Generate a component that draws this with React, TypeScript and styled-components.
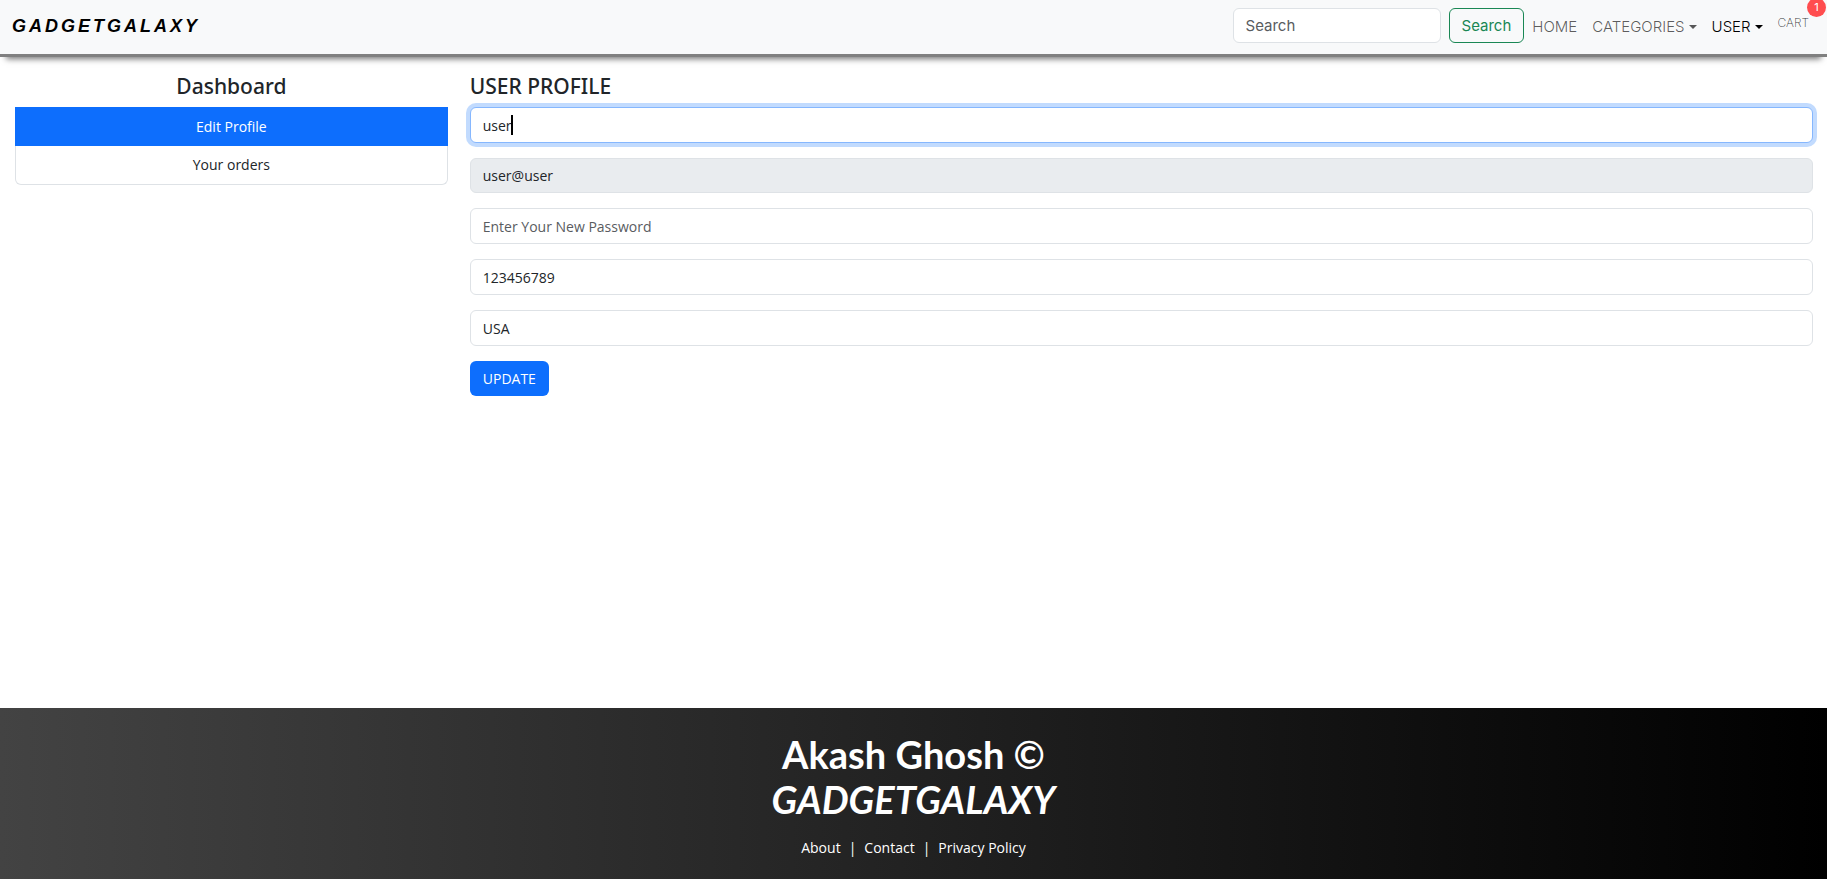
import React from "react";
import styled, { createGlobalStyle, css } from "styled-components";

const bodyFont = `"Open Sans", "Noto Sans", sans-serif`;
const navFont = `Inter, Roboto, sans-serif`;

const GlobalStyle = createGlobalStyle`
  *, *::before, *::after { box-sizing: border-box; }
  body {
    margin: 0;
    background: #fff;
    color: #212529;
    font-family: ${bodyFont};
    font-size: 14px;
    line-height: 22px;
  }
  a { color: inherit; text-decoration: none; }
`;

const Page = styled.div`
  display: flex;
  flex-direction: column;
  min-height: 100vh;
`;

const Navbar = styled.header`
  display: flex;
  align-items: center;
  justify-content: space-between;
  padding: 8px 18px 11px 12px;
  background: #f8f9fa;
  border-bottom: 3px solid #808080;
  box-shadow: 0 8px 6px -6px #777;
  font-family: ${navFont};
  font-size: 15px;
`;

const Brand = styled.a`
  color: #000;
  font-family: "Liberation Sans", Arial, sans-serif;
  font-size: 18px;
  font-style: italic;
  font-weight: 700;
  letter-spacing: 3px;
`;

const NavRight = styled.nav`
  display: flex;
  align-items: center;
`;

const SearchForm = styled.form`
  display: flex;
  gap: 8px;
`;

const control = css`
  border: 1px solid #dee2e6;
  border-radius: 6px;
  background: #fff;
  color: #212529;
  font: inherit;
  &::placeholder { color: #595c5f; opacity: 1; }
`;

const SearchInput = styled.input`
  ${control}
  width: 208px;
  height: 35px;
  padding: 0 12px;
`;

const SearchButton = styled.button`
  height: 35px;
  padding: 0 12px;
  border: 1px solid #198754;
  border-radius: 6px;
  background: transparent;
  color: #198754;
  font: inherit;
`;

const NavList = styled.ul`
  display: flex;
  align-items: center;
  gap: 15px;
  margin: 0;
  padding: 2px 0 0 8px;
  list-style: none;
`;

const navText = css<{ $active?: boolean }>`
  color: ${({ $active }) => ($active ? "#000" : "rgba(0, 0, 0, 0.65)")};
  font-weight: 300;
`;

const NavLink = styled.a`
  ${navText}
`;

const NavToggle = styled.button<{ $active?: boolean }>`
  display: flex;
  align-items: center;
  gap: 4px;
  padding: 0;
  border: 0;
  background: none;
  font: inherit;
  ${navText}
  &::after {
    content: "";
    border-top: 4px solid;
    border-left: 4px solid transparent;
    border-right: 4px solid transparent;
  }
`;

const CartItem = styled.li`
  position: relative;
  padding-bottom: 8px;
`;

const CartLink = styled.a`
  display: block;
  color: rgba(0, 0, 0, 0.8);
  font-size: 12px;
  font-weight: 200;
  line-height: 22px;
`;

const CartCount = styled.span`
  position: absolute;
  top: -14px;
  right: -17px;
  width: 19px;
  height: 19px;
  border-radius: 50%;
  background: #ff4d4f;
  color: #fff;
  font-size: 11px;
  line-height: 19px;
  text-align: center;
`;

const Main = styled.main`
  display: grid;
  grid-template-columns: 1fr 3fr;
  flex: 1;
  padding-top: 16px;
`;

const Sidebar = styled.aside`
  padding: 0 9px 0 15px;
  text-align: center;
`;

const Profile = styled.section`
  padding: 0 14px 0 13px;
`;

const Heading = styled.h1`
  margin: 0 0 8px;
  font-family: "Noto Sans", "Open Sans", sans-serif;
  font-size: 21px;
  font-weight: 500;
  line-height: 26px;
`;

const Menu = styled.nav`
  display: flex;
  flex-direction: column;
`;

const MenuLink = styled.a<{ $active?: boolean }>`
  padding: 8px 15px;
  border: 1px solid #dee2e6;
  border-top: 0;
  &:last-child { border-radius: 0 0 6px 6px; }
  ${({ $active }) =>
    $active &&
    css`
      border: 0;
      padding: 9px 16px 8px;
      background: #0d6efd;
      color: #fff;
    `}
`;

const Form = styled.form`
  display: flex;
  flex-direction: column;
  align-items: flex-start;
  gap: 15px;
`;

const Field = styled.div`
  position: relative;
  width: 100%;
  display: flex;
`;

const TextInput = styled.input`
  ${control}
  width: 100%;
  height: 36px;
  padding: 0 12px;
  caret-color: transparent;
  &:focus {
    border-color: #86b7fe;
    outline: 0;
    box-shadow: 0 0 0 4px rgba(13, 110, 253, 0.25);
  }
  &:disabled {
    height: 35px;
    background: #e9ecef;
  }
`;

const Caret = styled.span`
  position: absolute;
  top: 8px;
  left: 41px;
  width: 2px;
  height: 20px;
  background: #000;
`;

const UpdateButton = styled.button`
  height: 35px;
  padding: 0 13px;
  border: 0;
  border-radius: 6px;
  background: #0d6efd;
  color: #fff;
  font: inherit;
`;

const Footer = styled.footer`
  padding: 24px 16px 20px;
  background: linear-gradient(to right, #434343, #000);
  color: #fff;
  text-align: center;
`;

const FooterTitle = styled.h2`
  margin: 0 0 15px;
  font-family: Lato, "Open Sans", sans-serif;
  font-size: 38px;
  font-weight: 700;
  line-height: 45px;
`;

const FooterLinks = styled.nav`
  display: flex;
  justify-content: center;
  gap: 8px;
`;

const fields = [
  { label: "Name", type: "text", value: "user", autoFocus: true },
  { label: "Email", type: "email", value: "user@user", disabled: true },
  { label: "Password", type: "password", placeholder: "Enter Your New Password" },
  { label: "Phone", type: "text", value: "123456789" },
  { label: "Address", type: "text", value: "USA" },
];

export default function App() {
  return (
    <Page>
      <GlobalStyle />
      <Navbar>
        <Brand href="#">GADGETGALAXY</Brand>
        <NavRight>
          <SearchForm role="search">
            <SearchInput type="search" placeholder="Search" aria-label="Search" />
            <SearchButton type="submit">Search</SearchButton>
          </SearchForm>
          <NavList>
            <li><NavLink href="#">HOME</NavLink></li>
            <li><NavToggle type="button">CATEGORIES</NavToggle></li>
            <li><NavToggle type="button" $active>USER</NavToggle></li>
            <CartItem>
              <CartLink href="#">CART</CartLink>
              <CartCount>1</CartCount>
            </CartItem>
          </NavList>
        </NavRight>
      </Navbar>
      <Main>
        <Sidebar>
          <Heading as="h2">Dashboard</Heading>
          <Menu>
            <MenuLink href="#" $active>Edit Profile</MenuLink>
            <MenuLink href="#">Your orders</MenuLink>
          </Menu>
        </Sidebar>
        <Profile>
          <Heading>USER PROFILE</Heading>
          <Form>
            {fields.map(({ label, value, autoFocus, ...rest }) => (
              <Field key={label}>
                <TextInput aria-label={label} defaultValue={value} autoFocus={autoFocus} {...rest} />
                {autoFocus && <Caret />}
              </Field>
            ))}
            <UpdateButton type="submit">UPDATE</UpdateButton>
          </Form>
        </Profile>
      </Main>
      <Footer>
        <FooterTitle>
          Akash Ghosh ©<br />
          <em>GADGETGALAXY</em>
        </FooterTitle>
        <FooterLinks>
          <a href="#">About</a>
          <span>|</span>
          <a href="#">Contact</a>
          <span>|</span>
          <a href="#">Privacy Policy</a>
        </FooterLinks>
      </Footer>
    </Page>
  );
}
